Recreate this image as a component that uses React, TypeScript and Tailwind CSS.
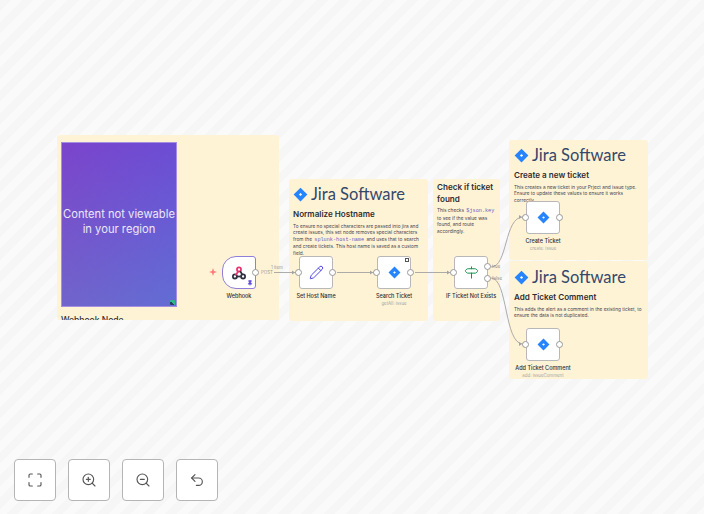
import { Maximize, ZoomIn, ZoomOut, Undo2, Pencil, Signpost, Pin } from "lucide-react";
import type { ReactNode } from "react";

const JiraMark = ({ size }: { size: number }) => (
  <svg width={size} height={size} viewBox="0 0 24 24">
    <path d="M12 1 23 12 12 23 1 12Z" fill="#2684ff" />
    <path d="M12 9.500 14.500 12 12 14.500 9.500 12Z" fill="#fff" />
  </svg>
);

const JiraLogo = () => (
  <div className="flex items-center gap-[3px] h-[18px]">
    <JiraMark size={15} />
    <span className="font-['Lato',sans-serif] text-[16.500px] leading-none text-[#34486b] whitespace-nowrap">
      Jira Software
    </span>
  </div>
);

const Sticky = ({ className, children }: { className: string; children: ReactNode }) => (
  <div className={`absolute rounded-[3px] bg-[#fff3d6] overflow-hidden text-[#30303d] ${className}`}>{children}</div>
);

const Title = ({ children }: { children: ReactNode }) => (
  <h2 className="text-[8.100px] leading-[11.500px] font-semibold text-[#2d2d33]">{children}</h2>
);

const Body = ({ children }: { children: ReactNode }) => (
  <p className="mt-[2px] text-[4.750px] leading-[6.600px] text-[#44444f]">{children}</p>
);

const Mono = ({ children }: { children: ReactNode }) => (
  <code className="px-[1px] font-['Liberation_Mono',monospace] text-[5.200px] text-[#6a5bc4]">{children}</code>
);

const Dot = ({ className }: { className: string }) => (
  <span className={`absolute size-[7px] rounded-full border border-[#9a9a9a] bg-white ${className}`} />
);

// a workflow node: box, input / output ports, label under it
const Node = ({
  className,
  label,
  sub,
  output = true,
  children,
}: {
  className: string;
  label: string;
  sub?: string;
  output?: boolean;
  children: ReactNode;
}) => (
  <div className={`absolute w-[34px] h-[33px] ${className}`}>
    <div className="size-full rounded-[3px] border border-[#b8b8b8] bg-white flex items-center justify-center">
      {children}
    </div>
    <Dot className="-left-[4px] top-[13px]" />
    {output && <Dot className="-right-[3px] top-[13px]" />}
    <div className="absolute top-[36px] left-1/2 -translate-x-1/2 flex flex-col items-center whitespace-nowrap">
      <span className="text-[5.500px] leading-[8px] font-medium text-[#2d2d33]">{label}</span>
      {sub && <span className="mt-[1px] text-[4.400px] leading-[6px] text-[#a5a5a5]">{sub}</span>}
    </div>
  </div>
);

const Edges = () => (
  <svg className="absolute inset-0" width={704} height={514} fill="none" stroke="#a3a3a3" strokeWidth={0.9}>
    <path d="M260 272.500H296M337 272.500H374M415 272.500H451" />
    <path d="M491 267C508 267 504 217 523 217" />
    <path d="M491 278C508 278 504 344 523 344" />
    <g fill="#a3a3a3" stroke="none">
      <path d="M292 270.500 295 272.500 292 274.500Z" />
      <path d="M370 270.500 373 272.500 370 274.500Z" />
      <path d="M447 270.500 450 272.500 447 274.500Z" />
      <path d="M519 215 522 217 519 219Z" />
      <path d="M519 342 522 344 519 346Z" />
    </g>
  </svg>
);

const tools = [Maximize, ZoomIn, ZoomOut, Undo2];

export default function App() {
  return (
    <div className="relative w-[704px] h-[514px] overflow-hidden bg-[repeating-linear-gradient(135deg,#f6f6f6_0px,#f6f6f6_8px,#fafafa_8px,#fafafa_16px)] font-['Inter','Liberation_Sans',sans-serif]">
      <Sticky className="left-[57px] top-[135px] w-[222px] h-[185px]">
        <div className="mx-[4px] mt-[7px] w-[116px] h-[165px] pb-[6px] border border-[#a58fe0] bg-[linear-gradient(115deg,rgba(140,80,190,0.5),rgba(90,110,220,0.5)),linear-gradient(180deg,#6a38d8,#6a6ccc)] relative flex items-center justify-center text-center text-[11.200px] leading-[15px] text-[#ece8f8] whitespace-nowrap">
          <span>
            Content not viewable
            <br />
            in your region
          </span>
          <span className="absolute right-[1px] bottom-[1px] size-[5px] rounded-[1px] bg-[linear-gradient(45deg,#27405c_40%,#2fb98a_40%)]" />
        </div>
        <p className="mt-[8px] ml-[4px] text-[8.500px] leading-[11px] font-medium text-[#2d2d33]">Webhook Node</p>
      </Sticky>

      <Sticky className="left-[289px] top-[179px] w-[139px] h-[142px] px-[4px] pt-[6px]">
        <JiraLogo />
        <div className="mt-[6px]">
          <Title>Normalize Hostname</Title>
        </div>
        <Body>
          To ensure no special characters are passed into jira and create issues, this set node removes special
          characters from the <Mono>splunk-host-name</Mono> and uses that to search and create tickets. This host name
          is saved as a custom field.
        </Body>
      </Sticky>

      <Sticky className="left-[433px] top-[179px] w-[67px] h-[142px] px-[4px] pt-[3px]">
        <Title>Check if ticket found</Title>
        <Body>
          This checks <Mono>$json.key</Mono> to see if the value was found, and route accordingly.
        </Body>
      </Sticky>

      <Sticky className="left-[509px] top-[140px] w-[139px] h-[120px] px-[5px] pt-[6px]">
        <JiraLogo />
        <div className="mt-[6px]">
          <Title>Create a new ticket</Title>
        </div>
        <Body>
          This creates a new ticket in your Prject and issue type. Ensure to update these values to ensure it works
          correctly.
        </Body>
      </Sticky>

      <Sticky className="left-[509px] top-[261px] w-[139px] h-[118px] px-[5px] pt-[7px]">
        <JiraLogo />
        <div className="mt-[6px]">
          <Title>Add Ticket Comment</Title>
        </div>
        <Body>This adds the alert as a comment in the existing ticket, to ensure the data is not duplicated.</Body>
      </Sticky>

      <Edges />

      {/* webhook trigger */}
      <svg className="absolute left-[209px] top-[268px]" width={8} height={8} viewBox="0 0 8 8">
        <path d="M4 0 5 3 8 4 5 5 4 8 3 5 0 4 3 3Z" fill="#ff7a7a" />
      </svg>
      <div className="absolute left-[222px] top-[256px] w-[34px] h-[33px]">
        <div className="size-full rounded-l-[14px] rounded-r-[3px] border border-[#8f7fd8] bg-white flex items-center justify-center">
          <svg width={14} height={14} viewBox="0 0 24 24" fill="none" strokeWidth={3}>
            <circle cx={12} cy={6} r={3.500} stroke="#e8336f" />
            <circle cx={5} cy={18} r={3.500} stroke="#303040" />
            <circle cx={19} cy={18} r={3.500} stroke="#303040" />
            <path d="M11 9 6 16" stroke="#e8336f" />
            <path d="M14 9 18 15" stroke="#303040" />
            <path d="M8 18H15" stroke="#303040" />
          </svg>
        </div>
        <Pin className="absolute right-[3px] bottom-[3px] size-[6px] text-[#5a45d8] fill-[#5a45d8]" />
        <Dot className="-right-[3px] top-[13px]" />
        <span className="absolute top-[36px] left-1/2 -translate-x-1/2 text-[5.500px] leading-[8px] font-medium text-[#2d2d33]">
          Webhook
        </span>
      </div>
      <span className="absolute left-[260px] top-[270px] px-[1px] text-[4.400px] leading-[5px] text-[#9a9a9a] bg-[#fff3d6]">
        POST
      </span>
      <span className="absolute left-[271px] top-[265px] text-[4.400px] leading-[6px] text-[#9a9a9a]">1 item</span>

      <Node className="left-[299px] top-[256px]" label="Set Host Name">
        <Pencil className="size-[15px] text-[#4f46e5]" strokeWidth={1.6} />
      </Node>

      <Node className="left-[377px] top-[256px]" label="Search Ticket" sub="getAll: issue">
        <JiraMark size={13} />
        <span className="absolute right-[2px] top-[2px] size-[4px] border border-[#555] bg-white" />
      </Node>

      <Node className="left-[454px] top-[256px]" label="IF Ticket Not Exists" output={false}>
        <Signpost className="size-[15px] text-[#15914f]" strokeWidth={1.6} />
        <Dot className="-right-[3px] top-[7px]" />
        <Dot className="-right-[3px] top-[19px]" />
        <span className="absolute left-[38px] top-[8px] text-[4.400px] leading-[6px] text-[#8a8a8a]">true</span>
        <span className="absolute left-[38px] top-[20px] text-[4.400px] leading-[6px] text-[#8a8a8a]">false</span>
      </Node>

      <Node className="left-[526px] top-[201px]" label="Create Ticket" sub="create: issue">
        <JiraMark size={13} />
      </Node>

      <Node className="left-[526px] top-[328px]" label="Add Ticket Comment" sub="add: issueComment">
        <JiraMark size={13} />
      </Node>

      <div className="absolute left-[14px] top-[459px] flex gap-[12px]">
        {tools.map((Icon, i) => (
          <button
            key={i}
            className="size-[42px] rounded-[4px] border border-[#b5b5b5] bg-white flex items-center justify-center text-[#555]"
          >
            <Icon className="size-[16px]" strokeWidth={1.7} />
          </button>
        ))}
      </div>
    </div>
  );
}
